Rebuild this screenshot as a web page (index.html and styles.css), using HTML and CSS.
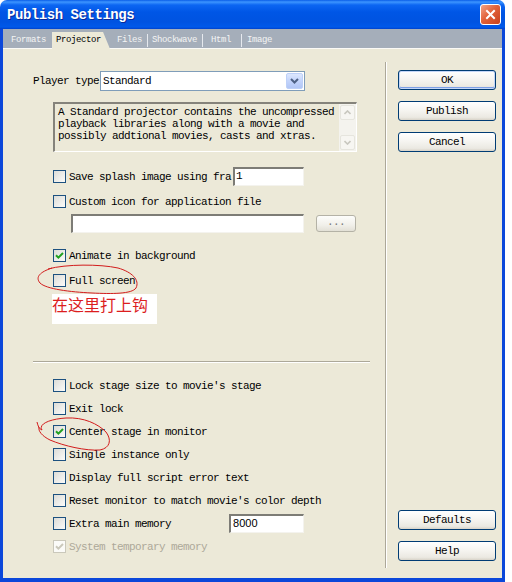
FILE: index.html
```html
<!DOCTYPE html>
<html lang="en">
<head>
    <meta charset="UTF-8">
    <title>Publish Settings</title>
    <link rel="stylesheet" href="styles.css">
</head>
<body>
<div class="window">
    <div class="titlebar">
        <span class="title">Publish Settings</span>
        <span class="close">
            <svg width="13" height="13" viewBox="0 0 13 13"><path d="M3 3L10 10M10 3L3 10" stroke="#fff" stroke-width="2" stroke-linecap="square"/></svg>
        </span>
    </div>
    <div class="frame">
        <div class="tabs">
            <span class="tab t-formats">Formats</span>
            <span class="tab active">Projector</span>
            <span class="tab t-files">Files</span>
            <span class="tab-sep s1"></span>
            <span class="tab t-shock">Shockwave</span>
            <span class="tab-sep s2"></span>
            <span class="tab t-html">Html</span>
            <span class="tab-sep s3"></span>
            <span class="tab t-image">Image</span>
        </div>
        <div class="body">
            <div class="left">
                <div class="player">
                    <span class="label">Player type</span>
                    <div class="select">
                        <span>Standard</span>
                        <span class="drop">
                            <svg width="9" height="6" viewBox="0 0 9 6"><path d="M1 1l3.5 3.5L8 1" stroke="#4d6185" stroke-width="2" fill="none"/></svg>
                        </span>
                    </div>
                </div>

                <div class="desc">
                    <div class="desc-text">A Standard projector contains the uncompressed<br>playback libraries along with a movie and<br>possibly addtional movies, casts and xtras.</div>
                    <div class="scroll">
                        <span class="sb-btn"><svg width="7" height="5" viewBox="0 0 7 5"><path d="M0.5 4L3.5 1L6.5 4" stroke="#c8c7bf" stroke-width="1.6" fill="none"/></svg></span>
                        <span class="sb-btn"><svg width="7" height="5" viewBox="0 0 7 5"><path d="M0.5 1L3.5 4L6.5 1" stroke="#c8c7bf" stroke-width="1.6" fill="none"/></svg></span>
                    </div>
                </div>

                <div class="row r-splash">
                    <span class="check"></span>
                    <span>Save splash image using fra</span>
                    <span class="field f-frame">1</span>
                </div>
                <div class="row r-icon">
                    <span class="check"></span>
                    <span>Custom icon for application file</span>
                </div>
                <div class="row r-path">
                    <span class="field f-path"></span>
                    <span class="dots">...</span>
                </div>
                <div class="row r-anim">
                    <span class="check"><svg width="11" height="11" viewBox="0 0 11 11"><path d="M2 5.2l2.4 2.4L9 3" stroke="#21a121" stroke-width="2" fill="none"/></svg></span>
                    <span>Animate in background</span>
                </div>
                <div class="row r-full">
                    <span class="check"></span>
                    <span>Full screen</span>
                </div>
                <div class="note">在这里打上钩</div>

                <div class="hline"></div>

                <div class="row low first">
                    <span class="check"></span>
                    <span>Lock stage size to movie's stage</span>
                </div>
                <div class="row low">
                    <span class="check"></span>
                    <span>Exit lock</span>
                </div>
                <div class="row low">
                    <span class="check"><svg width="11" height="11" viewBox="0 0 11 11"><path d="M2 5.2l2.4 2.4L9 3" stroke="#21a121" stroke-width="2" fill="none"/></svg></span>
                    <span>Center stage in monitor</span>
                </div>
                <div class="row low">
                    <span class="check"></span>
                    <span>Single instance only</span>
                </div>
                <div class="row low">
                    <span class="check"></span>
                    <span>Display full script error text</span>
                </div>
                <div class="row low">
                    <span class="check"></span>
                    <span>Reset monitor to match movie's color depth</span>
                </div>
                <div class="row low">
                    <span class="check"></span>
                    <span>Extra main memory</span>
                    <span class="field f-mem">8000</span>
                </div>
                <div class="row low disabled">
                    <span class="check"><svg width="11" height="11" viewBox="0 0 11 11"><path d="M2 5.2l2.4 2.4L9 3" stroke="#cac8bb" stroke-width="2" fill="none"/></svg></span>
                    <span>System temporary memory</span>
                </div>
            </div>

            <div class="vsep"></div>

            <div class="right">
                <span class="btn default">OK</span>
                <span class="btn">Publish</span>
                <span class="btn">Cancel</span>
                <span class="btn push">Defaults</span>
                <span class="btn">Help</span>
            </div>
        </div>
    </div>

    <!-- red hand-drawn marks over the dialog -->
    <svg class="marks" width="505" height="582" viewBox="0 0 505 582">
        <path d="M48 269C66 264 100 264 118 268C132 272 140 280 136 288C132 294 112 294 92 293C70 292 46 289 40 283C35 277 40 272 52 268" stroke="#d21c1c" stroke-width="1" fill="none"/>
        <path d="M37 422C38 426 39 429 42 430C38 424 50 419 66 418C84 417 98 424 106 432C112 440 110 448 100 450C86 451 64 446 50 440C42 436 38 431 39 427" stroke="#d21c1c" stroke-width="1" fill="none"/>
    </svg>
</div>
</body>
</html>
```

FILE: styles.css
```css
* {
    box-sizing: border-box;
}
body {
    margin: 0;
    background: #fff;
    font-family: "Liberation Mono", monospace;
    font-size: 11px;
    letter-spacing: -0.6px;
    color: #000;
}
.window {
    position: relative;
    width: 505px;
    height: 582px;
    display: flex;
    flex-direction: column;
}

/* title bar */
.titlebar {
    height: 29px;
    flex: none;
    display: flex;
    align-items: center;
    padding-left: 7px;
    border-radius: 7px 7px 0 0;
    background: linear-gradient(#0a5ee8 0, #3d95ff 2px, #0c66f2 5px, #0056e6 12px, #0053e1 22px, #0059ea 27px, #0042cc 29px);
}
.title {
    color: #fff;
    font-weight: bold;
    font-size: 14px;
    letter-spacing: -0.45px;
    text-shadow: 1px 1px 0 #0b2a9a;
}
.close {
    margin-left: auto;
    margin-right: 4px;
    width: 21px;
    height: 21px;
    border: 1px solid #fff;
    border-radius: 3px;
    background: linear-gradient(135deg, #f3a488, #e2623a 45%, #c8401c);
    display: flex;
    align-items: center;
    justify-content: center;
}

/* blue frame round tabs and body */
.frame {
    flex: 1;
    display: flex;
    flex-direction: column;
    border-style: solid;
    border-color: #0b47da;
    border-width: 0 3px 4px 3px;
}
.tabs {
    height: 19px;
    flex: none;
    display: flex;
    align-items: flex-end;
    background: #a5aeba;
}
.tab {
    color: #f4f4f4;
    font-size: 9px;
    letter-spacing: -0.4px;
    line-height: 16px;
    height: 16px;
}
.tab.active {
    position: relative;
    z-index: 1;
    height: 17px;
    margin-bottom: -1px;
    margin-left: 6px;
    padding: 0 9px 0 4px;
    color: #000;
    background: #ece9d8;
    clip-path: polygon(0 0, calc(100% - 7px) 0, 100% 100%, 0 100%);
}
.t-formats { margin-left: 8px; }
.t-files { margin-left: 7px; }
.t-shock { margin-left: 4px; }
.t-html { margin-left: 8px; }
.t-image { margin-left: 5px; }
.tab-sep {
    width: 1px;
    height: 13px;
    align-self: center;
    margin-top: 3px;
    background: #e6e9ee;
}
.s1 { margin-left: 5px; }
.s2 { margin-left: 5px; }
.s3 { margin-left: 10px; }

.body {
    flex: 1;
    display: flex;
    background: #ece9d8;
    border-top: 1px solid #fbfaf6;
}

/* left column */
.left {
    width: 382px;
    flex: none;
    padding-top: 22px;
}
.player {
    display: flex;
    align-items: center;
    height: 20px;
    margin-left: 30px;
}
.player .label {
    width: 67px;
}
.select {
    width: 205px;
    height: 20px;
    display: flex;
    align-items: center;
    padding-left: 2px;
    background: #fff;
    border: 1px solid #7f9db9;
}
.drop {
    margin-left: auto;
    margin-right: 1px;
    width: 17px;
    height: 16px;
    display: flex;
    align-items: center;
    justify-content: center;
    border: 1px solid #bdd0f8;
    border-radius: 2px;
    background: linear-gradient(#dce7fe, #c3d4fb 50%, #b1c6f6);
}

.desc {
    display: flex;
    margin: 11px 0 0 50px;
    width: 304px;
    height: 50px;
    border-style: solid;
    border-width: 2px 1px 1px 2px;
    border-color: #85837b #fff #fff #85837b;
}
.desc-text {
    flex: 1;
    padding: 2px 0 0 3px;
    line-height: 12px;
}
.scroll {
    width: 17px;
    display: flex;
    flex-direction: column;
    justify-content: space-between;
    padding: 1px;
    background: #f4f3ee;
}
.sb-btn {
    height: 15px;
    display: flex;
    align-items: center;
    justify-content: center;
    border: 1px solid #e6e5de;
    border-radius: 2px;
    background: #f7f6f2;
}

.row {
    display: flex;
    align-items: center;
    height: 19px;
    margin-left: 50px;
    white-space: pre;
}
.check {
    width: 13px;
    height: 13px;
    flex: none;
    margin-right: 3px;
    display: flex;
    align-items: center;
    justify-content: center;
    border: 1px solid #1c5180;
    background: linear-gradient(135deg, #dcdcd7, #fbfbf9);
}
.r-splash { margin-top: 15px; }
.r-icon { margin-top: 6px; }
.r-path { margin-top: 3px; margin-left: 68px; }
.r-anim { margin-top: 13px; }
.r-full { margin-top: 6px; }

.field {
    height: 19px;
    padding-left: 1px;
    line-height: 15px;
    background: #fff;
    border-style: solid;
    border-width: 2px 1px 1px 2px;
    border-color: #7d7c76 #f4f3ee #f4f3ee #7d7c76;
}
.f-frame {
    width: 71px;
    margin-left: 2px;
}
.f-path {
    width: 233px;
}
.f-mem {
    width: 75px;
    margin-left: 58px;
    padding-left: 2px;
    font-family: "Liberation Sans", Arial, sans-serif;
    font-size: 11px;
    letter-spacing: 0;
}
.dots {
    width: 40px;
    height: 17px;
    margin-left: 12px;
    text-align: center;
    line-height: 13px;
    color: #777;
    border: 1px solid #b4b2a6;
    border-radius: 3px;
    background: linear-gradient(#fdfdfb, #f1f0ea 60%, #e2e0d6);
}

.note {
    margin: 4px 0 0 49px;
    width: 105px;
    height: 30px;
    background: #fff;
    color: #dc1e1e;
    font-family: "Noto Sans CJK SC", sans-serif;
    font-size: 16px;
    line-height: 20px;
    letter-spacing: 0;
}

.hline {
    margin: 37px 0 0 30px;
    width: 337px;
    height: 2px;
    border-top: 1px solid #aca899;
    border-bottom: 1px solid #fff;
}
.row.low {
    height: 23px;
}
.row.low.first {
    margin-top: 11px;
}
.row.disabled {
    color: #aca899;
}
.row.disabled .check {
    border-color: #cac8bb;
    background: #fbfbf8;
}

/* separator and button column */
.vsep {
    width: 2px;
    flex: none;
    margin: 13px 0 10px;
    border-left: 1px solid #aca899;
    border-right: 1px solid #fff;
}
.right {
    flex: 1;
    display: flex;
    flex-direction: column;
    gap: 11px;
    padding: 21px 0 17px 11px;
}
.btn {
    width: 98px;
    height: 20px;
    text-align: center;
    line-height: 18px;
    border: 1px solid #003c74;
    border-radius: 3px;
    background: linear-gradient(#fff, #f6f5f1 45%, #ebe9e2 85%, #d8d3c8);
}
.btn.default {
    box-shadow: inset 0 0 0 1px #c4d6f7, inset 0 -1px 0 1px #7d9fe6;
}
.btn.push {
    margin-top: auto;
}

.marks {
    position: absolute;
    left: 0;
    top: 0;
    pointer-events: none;
}
```
